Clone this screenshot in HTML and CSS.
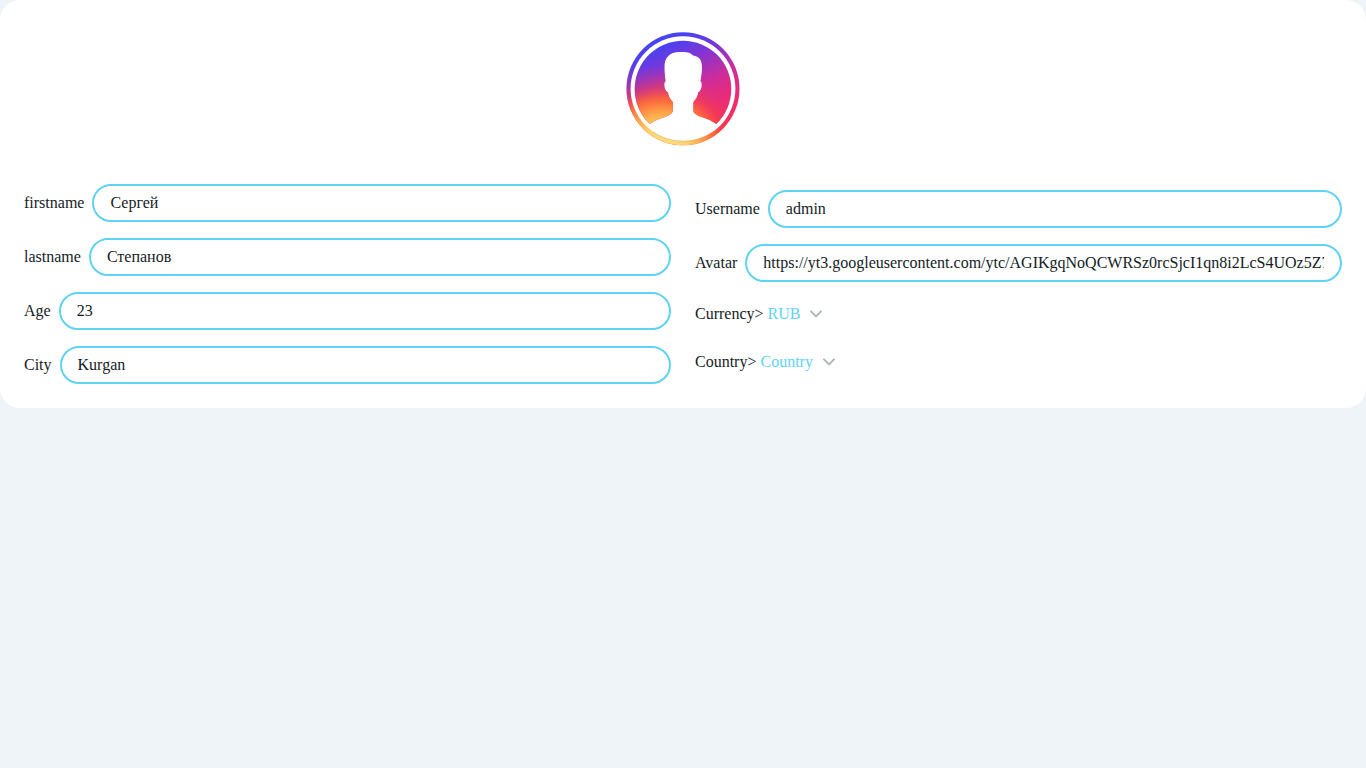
FILE: index.html
```html
<!DOCTYPE html>
<html lang="ru">
<head>
<meta charset="utf-8">
<title>Profile</title>
<link rel="stylesheet" href="styles.css">
</head>
<body>
<main class="card">
  <svg class="avatar" viewBox="1 0 128 128" aria-label="Avatar">
    <defs>
      <linearGradient id="base" gradientUnits="userSpaceOnUse" x1="42" y1="10" x2="88" y2="116">
        <stop offset="0" stop-color="#4345f5"/>
        <stop offset=".13" stop-color="#5140ee"/>
        <stop offset=".3" stop-color="#8434d2"/>
        <stop offset=".54" stop-color="#d02c98"/>
        <stop offset=".76" stop-color="#ef2a70"/>
        <stop offset="1" stop-color="#fb3148"/>
      </linearGradient>
      <radialGradient id="warm" gradientUnits="userSpaceOnUse" cx="44" cy="130" r="88">
        <stop offset="0" stop-color="#ffe584"/>
        <stop offset=".3" stop-color="#fcd368"/>
        <stop offset=".46" stop-color="#ffa94a"/>
        <stop offset=".62" stop-color="#ff6a38" stop-opacity=".95"/>
        <stop offset=".77" stop-color="#f6404e" stop-opacity=".5"/>
        <stop offset="1" stop-color="#c83890" stop-opacity="0"/>
      </radialGradient>
      <clipPath id="disc"><circle cx="65" cy="65" r="48.3"/></clipPath>
    </defs>
    <circle cx="65" cy="64.7" r="56.5" fill="url(#base)"/>
    <circle cx="65" cy="64.7" r="56.5" fill="url(#warm)"/>
    <circle cx="65" cy="64.7" r="52.4" fill="#fff"/>
    <path d="M35 107.7A52.4 52.4 0 0 0 95 107.7" fill="none" stroke="#9b8a78" stroke-opacity=".4" stroke-width=".7"/>
    <g clip-path="url(#disc)">
      <path d="M10 10H120V88L98 100C90 93 75 93 75.4 86V78C79 74 80 71 80.2 68.5C83 67 84.5 62 83.4 58.5L82.5 57C84 48 84.4 43 83.5 39C82.5 34 79 32 75 31.5C72 28 68 28 62 28C51 28 46.5 34 46.5 43C46.5 48 47 53 47.6 57L46.5 58.5C45.7 62 47 67 50 68.5C50.3 71 51.5 75 54.8 78V86C55 93 40 93 32 100L10 88Z" fill="url(#base)"/>
      <path d="M10 10H120V88L98 100C90 93 75 93 75.4 86V78C79 74 80 71 80.2 68.5C83 67 84.5 62 83.4 58.5L82.5 57C84 48 84.4 43 83.5 39C82.5 34 79 32 75 31.5C72 28 68 28 62 28C51 28 46.5 34 46.5 43C46.5 48 47 53 47.6 57L46.5 58.5C45.7 62 47 67 50 68.5C50.3 71 51.5 75 54.8 78V86C55 93 40 93 32 100L10 88Z" fill="url(#warm)"/>
    </g>
  </svg>
  <div class="columns">
    <div class="column">
      <label class="field">firstname<input class="input" value="Сергей"></label>
      <label class="field">lastname<input class="input" value="Степанов"></label>
      <label class="field">Age<input class="input" value="23"></label>
      <label class="field">City<input class="input" value="Kurgan"></label>
    </div>
    <div class="column">
      <label class="field">Username<input class="input" value="admin"></label>
      <label class="field">Avatar<input class="input" value="https://yt3.googleusercontent.com/ytc/AGIKgqNoQCWRSz0rcSjcI1qn8i2LcS4UOz5Z7abc"></label>
      <div class="select">Currency&gt;<span class="value">RUB</span><svg class="chevron" viewBox="0 0 24 24"><path d="M7 9.4L12 14.4L17 9.4"/></svg></div>
      <div class="select">Country&gt;<span class="value">Country</span><svg class="chevron" viewBox="0 0 24 24"><path d="M7 9.4L12 14.4L17 9.4"/></svg></div>
    </div>
  </div>
</main>
</body>
</html>
```
FILE: styles.css
```css
* { box-sizing: border-box; }
body {
  margin: 0;
  min-height: 100vh;
  background: #eef4f7;
  color: #141c1f;
  font: 16px/20px "Liberation Serif", "Times New Roman", serif;
}
.card {
  display: flex;
  flex-direction: column;
  align-items: center;
  gap: 32px;
  padding: 24px;
  background: #fff;
  border-radius: 20px;
}
.avatar { display: block; width: 128px; height: 128px; }
.columns {
  display: grid;
  grid-template-columns: 1fr 1fr;
  align-items: center;
  gap: 24px;
  width: 100%;
}
.column { display: flex; flex-direction: column; gap: 16px; min-width: 0; }
.field { display: flex; align-items: center; gap: 8px; }
.input {
  flex: 1;
  min-width: 0;
  height: 38px;
  margin: 0;
  padding: 0 16px;
  border: 2px solid #5ed3f3;
  border-radius: 20px;
  outline: none;
  background: #fff;
  color: inherit;
  font: inherit;
}
.select { display: flex; align-items: center; height: 32px; }
.value { margin: 0 4px; color: #5ed3f3; }
.chevron {
  width: 24px;
  height: 24px;
  fill: none;
  stroke: #a9b8be;
  stroke-width: 2;
  stroke-linecap: round;
  stroke-linejoin: round;
}
```
